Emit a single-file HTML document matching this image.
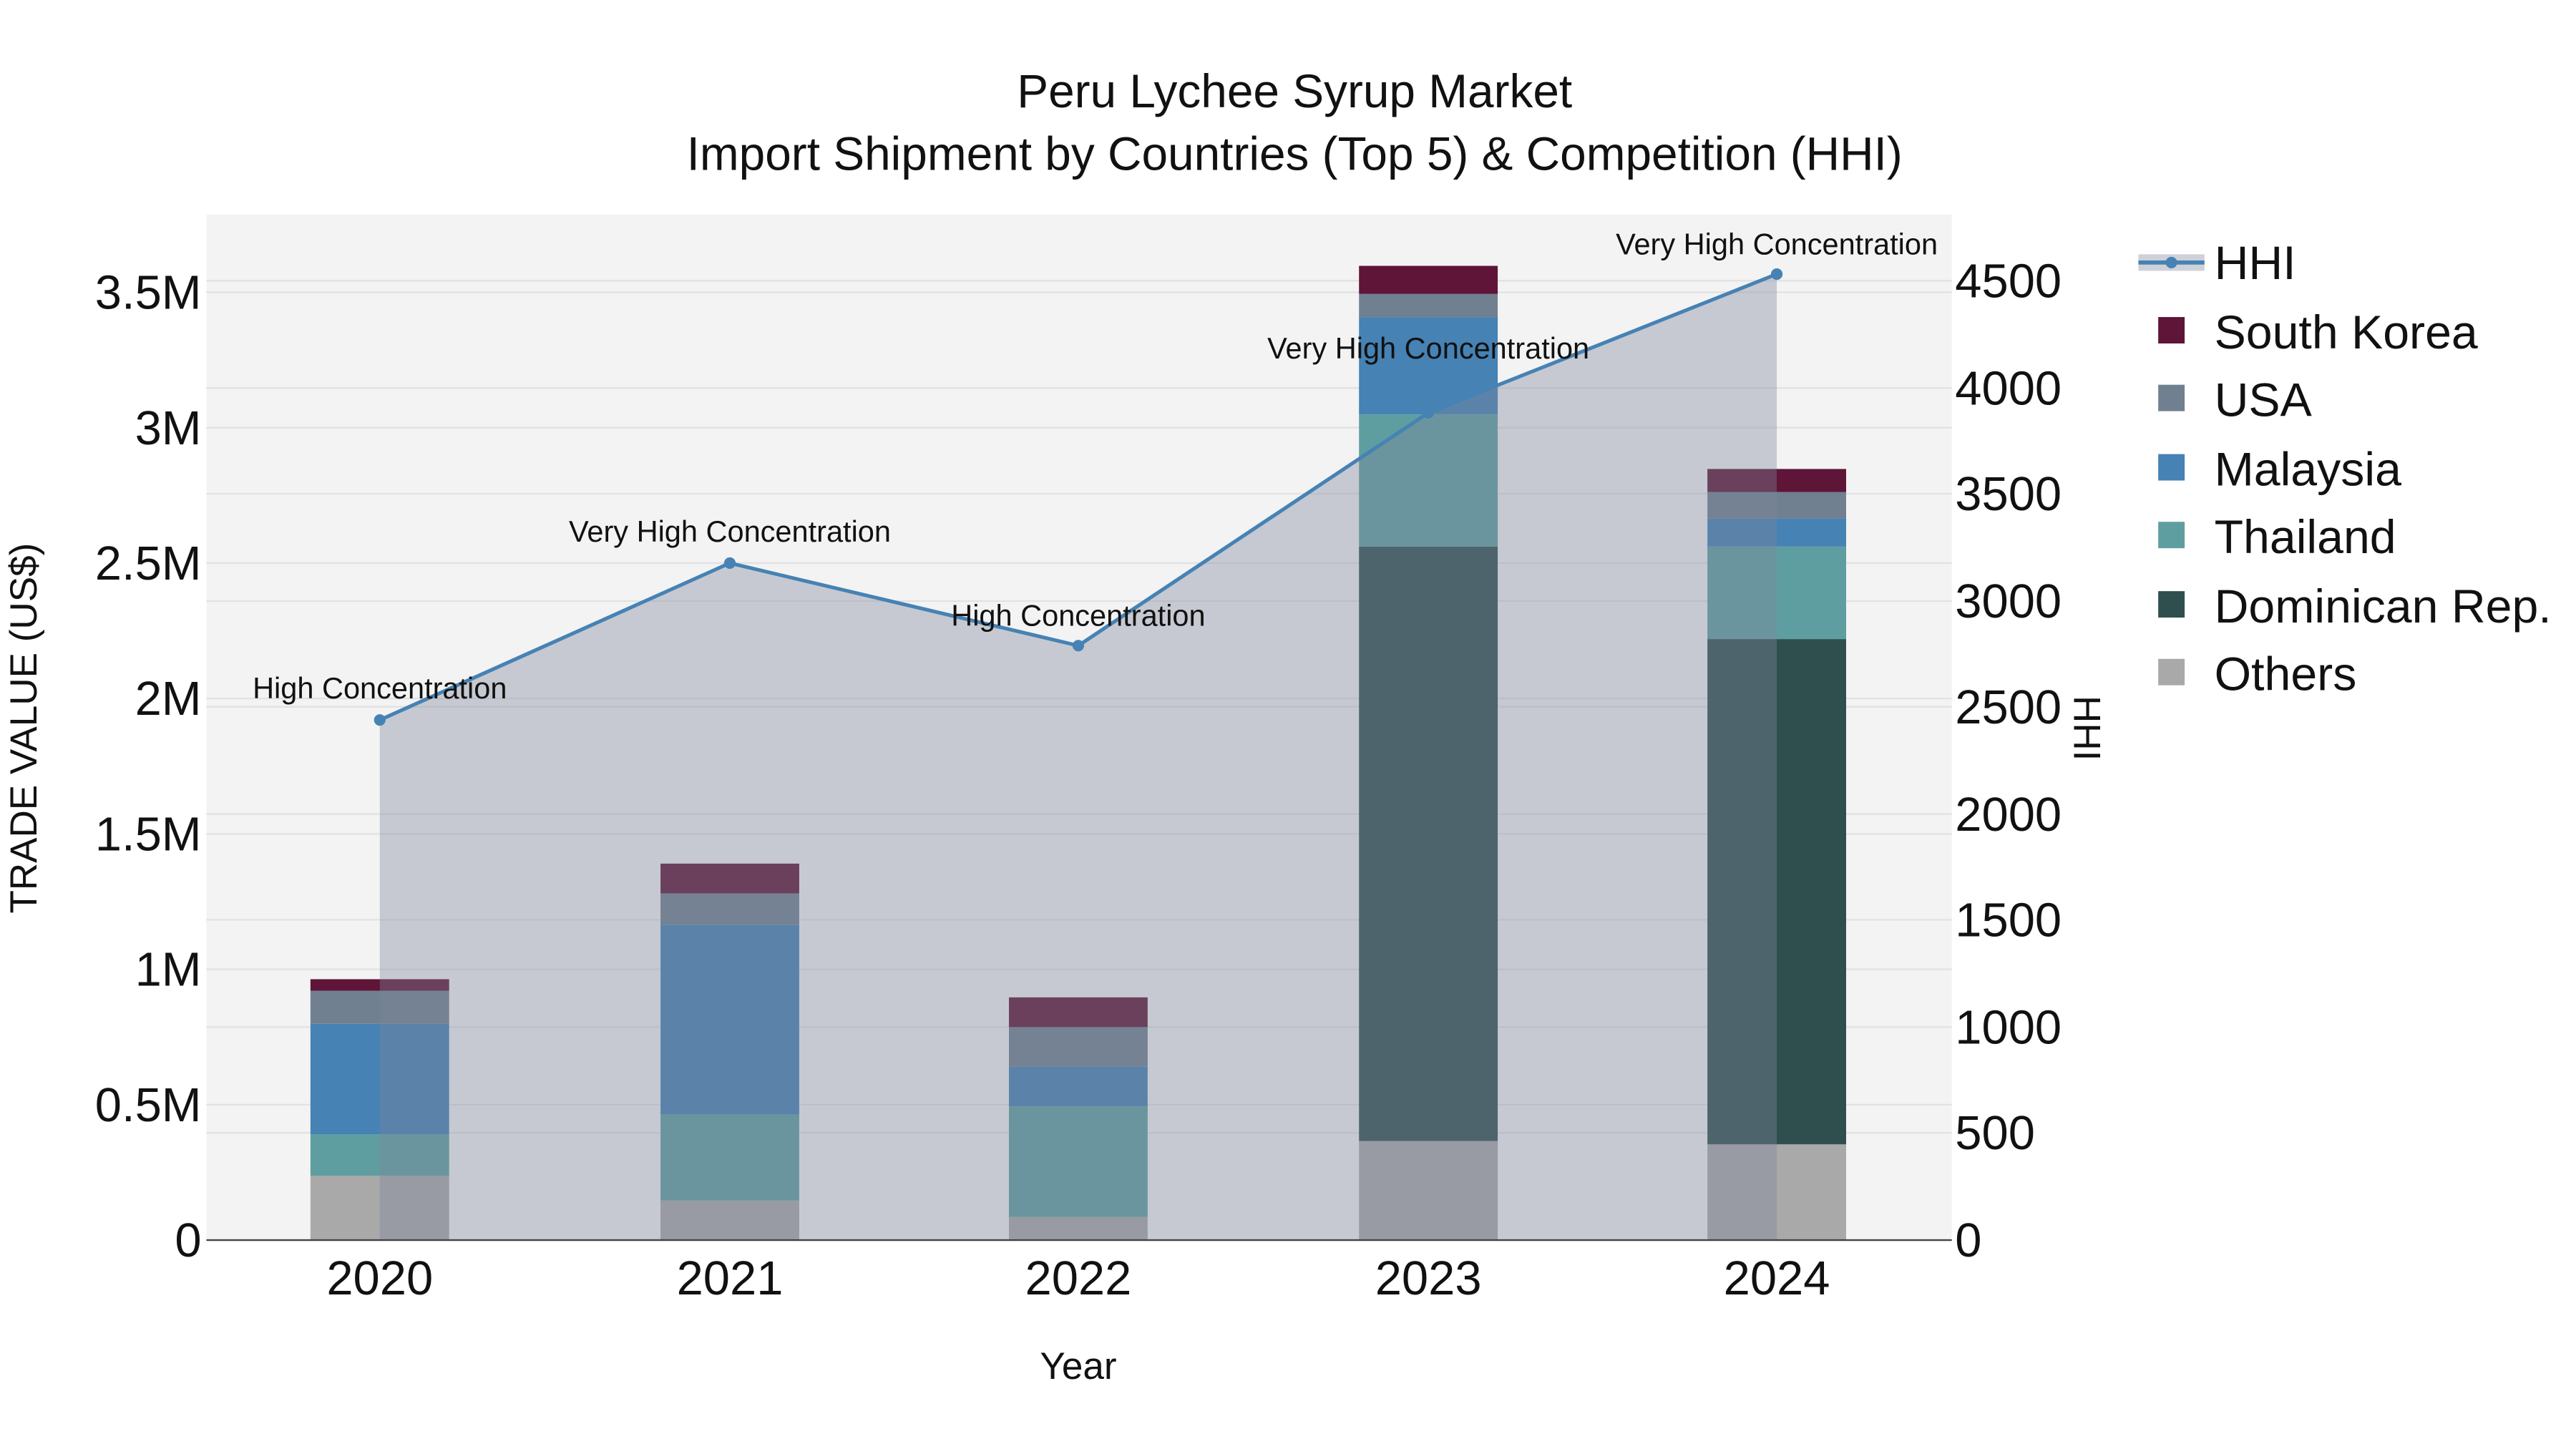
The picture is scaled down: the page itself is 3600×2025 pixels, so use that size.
<!DOCTYPE html>
<html><head><meta charset="utf-8"><style>html,body{margin:0;padding:0;background:#fff}svg{display:block}text{font-family:"Liberation Sans",Arial,sans-serif}</style></head>
<body>
<svg width="3600" height="2025" viewBox="0 0 1560 877.5" xmlns="http://www.w3.org/2000/svg">
<rect width="1560" height="877.5" fill="#fff"/>
<rect x="125" y="130" width="1057" height="621" fill="#f3f3f3"/>
<g stroke="#e2e2e2" stroke-width="1">
<line x1="125" x2="1182" y1="669" y2="669"/><line x1="125" x2="1182" y1="587" y2="587"/><line x1="125" x2="1182" y1="505" y2="505"/><line x1="125" x2="1182" y1="423" y2="423"/><line x1="125" x2="1182" y1="341" y2="341"/><line x1="125" x2="1182" y1="259" y2="259"/><line x1="125" x2="1182" y1="177" y2="177"/>
<line x1="125" x2="1182" y1="686" y2="686"/><line x1="125" x2="1182" y1="622" y2="622"/><line x1="125" x2="1182" y1="557" y2="557"/><line x1="125" x2="1182" y1="493" y2="493"/><line x1="125" x2="1182" y1="428" y2="428"/><line x1="125" x2="1182" y1="364" y2="364"/><line x1="125" x2="1182" y1="299" y2="299"/><line x1="125" x2="1182" y1="235" y2="235"/><line x1="125" x2="1182" y1="170" y2="170"/>
</g>
<g>
<rect x="188" y="712" width="84" height="39" fill="#a9a9a9"/><rect x="188" y="687" width="84" height="25" fill="#5f9ea0"/><rect x="188" y="620" width="84" height="67" fill="#4682b4"/><rect x="188" y="600" width="84" height="20" fill="#708090"/><rect x="188" y="593" width="84" height="7" fill="#5e1538"/>
<rect x="400" y="727" width="84" height="24" fill="#a9a9a9"/><rect x="400" y="675" width="84" height="52" fill="#5f9ea0"/><rect x="400" y="560" width="84" height="115" fill="#4682b4"/><rect x="400" y="541" width="84" height="19" fill="#708090"/><rect x="400" y="523" width="84" height="18" fill="#5e1538"/>
<rect x="611" y="737" width="84" height="14" fill="#a9a9a9"/><rect x="611" y="670" width="84" height="67" fill="#5f9ea0"/><rect x="611" y="646" width="84" height="24" fill="#4682b4"/><rect x="611" y="622" width="84" height="24" fill="#708090"/><rect x="611" y="604" width="84" height="18" fill="#5e1538"/>
<rect x="823" y="691" width="84" height="60" fill="#a9a9a9"/><rect x="823" y="331" width="84" height="360" fill="#2f4f4f"/><rect x="823" y="251" width="84" height="80" fill="#5f9ea0"/><rect x="823" y="192" width="84" height="59" fill="#4682b4"/><rect x="823" y="178" width="84" height="14" fill="#708090"/><rect x="823" y="161" width="84" height="17" fill="#5e1538"/>
<rect x="1034" y="693" width="84" height="58" fill="#a9a9a9"/><rect x="1034" y="387" width="84" height="306" fill="#2f4f4f"/><rect x="1034" y="331" width="84" height="56" fill="#5f9ea0"/><rect x="1034" y="314" width="84" height="17" fill="#4682b4"/><rect x="1034" y="298" width="84" height="16" fill="#708090"/><rect x="1034" y="284" width="84" height="14" fill="#5e1538"/>
</g>
<path d="M230 436 L442 341 L653 391 L865 250 L1076 166 L1076 751 L230 751 Z" fill="rgba(125,135,155,0.38)"/>
<polyline points="230,436 442,341 653,391 865,250 1076,166" fill="none" stroke="#4682b4" stroke-width="2.2"/>
<g fill="#4682b4"><circle cx="230" cy="436" r="3.5"/><circle cx="442" cy="341" r="3.5"/><circle cx="653" cy="391" r="3.5"/><circle cx="865" cy="250" r="3.5"/><circle cx="1076" cy="166" r="3.5"/></g>
<line x1="125" x2="1182" y1="751" y2="751" stroke="#444" stroke-width="1"/>
<g font-size="18" fill="#111" text-anchor="middle">
<text x="230" y="423">High Concentration</text><text x="442" y="328">Very High Concentration</text><text x="653" y="379">High Concentration</text><text x="865" y="217">Very High Concentration</text><text x="1076" y="154">Very High Concentration</text>
</g>
<g font-size="29" fill="#111" text-anchor="end">
<text x="122" y="761">0</text><text x="122" y="679">0.5M</text><text x="122" y="597">1M</text><text x="122" y="515">1.5M</text><text x="122" y="433">2M</text><text x="122" y="351">2.5M</text><text x="122" y="269">3M</text><text x="122" y="187">3.5M</text>
</g>
<g font-size="29" fill="#111">
<text x="1184" y="761">0</text><text x="1184" y="696">500</text><text x="1184" y="632">1000</text><text x="1184" y="567">1500</text><text x="1184" y="503">2000</text><text x="1184" y="438">2500</text><text x="1184" y="374">3000</text><text x="1184" y="309">3500</text><text x="1184" y="245">4000</text><text x="1184" y="180">4500</text>
</g>
<g font-size="29" fill="#111" text-anchor="middle">
<text x="230" y="784">2020</text><text x="442" y="784">2021</text><text x="653" y="784">2022</text><text x="865" y="784">2023</text><text x="1076" y="784">2024</text>
</g>
<text x="653" y="835" font-size="23" text-anchor="middle" fill="#111">Year</text>
<text transform="translate(22,441) rotate(-90)" font-size="23" text-anchor="middle" fill="#111">TRADE VALUE (US$)</text>
<text transform="translate(1256,441) rotate(90)" font-size="23" text-anchor="middle" fill="#111">HHI</text>
<text x="784" y="65" font-size="28.5" text-anchor="middle" fill="#111">Peru Lychee Syrup Market</text>
<text x="784" y="103" font-size="28.5" text-anchor="middle" fill="#111">Import Shipment by Countries (Top 5) &amp; Competition (HHI)</text>
<rect x="1295" y="154" width="40" height="10" fill="rgba(125,135,155,0.38)"/>
<line x1="1295" x2="1335" y1="159" y2="159" stroke="#4682b4" stroke-width="2.5"/><circle cx="1315" cy="159" r="3.5" fill="#4682b4"/>
<rect x="1307" y="192" width="16" height="16" fill="#5e1538"/>
<rect x="1307" y="233" width="16" height="16" fill="#708090"/>
<rect x="1307" y="275" width="16" height="16" fill="#4682b4"/>
<rect x="1307" y="316" width="16" height="16" fill="#5f9ea0"/>
<rect x="1307" y="358" width="16" height="16" fill="#2f4f4f"/>
<rect x="1307" y="399" width="16" height="16" fill="#a9a9a9"/>
<g font-size="28.7" fill="#111">
<text x="1341" y="169">HHI</text><text x="1341" y="211">South Korea</text><text x="1341" y="252">USA</text><text x="1341" y="294">Malaysia</text><text x="1341" y="335">Thailand</text><text x="1341" y="377">Dominican Rep.</text><text x="1341" y="418">Others</text>
</g>
</svg>
</body></html>
